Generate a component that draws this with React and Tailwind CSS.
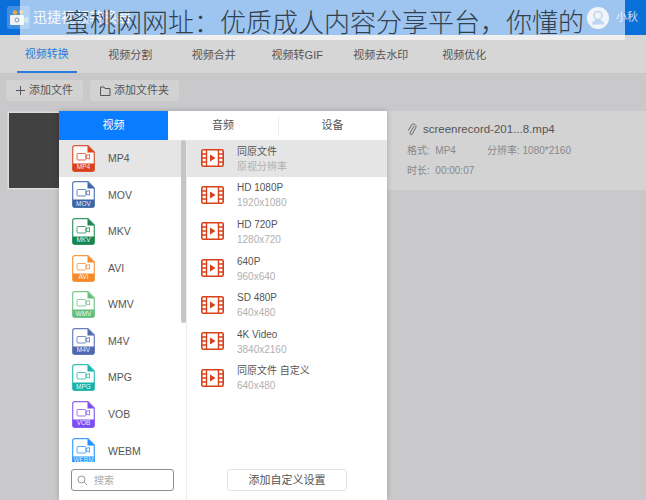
const FAM = { fontFamily: '"Liberation Sans","Noto Sans CJK SC",sans-serif' };

const formats = [
  ["MP4", "#d9401c", true],
  ["MOV", "#3d64a8"],
  ["MKV", "#17854e"],
  ["AVI", "#f58a2c"],
  ["WMV", "#63bf7c"],
  ["M4V", "#5068b0"],
  ["MPG", "#17b3a8"],
  ["VOB", "#7b4df0"],
  ["WEBM", "#1e8fff"],
];

const presets = [
  ["同原文件", "原视分辨率", true],
  ["HD 1080P", "1920x1080"],
  ["HD 720P", "1280x720"],
  ["640P", "960x640"],
  ["SD 480P", "640x480"],
  ["4K Video", "3840x2160"],
  ["同原文件 自定义", "640x480"],
];

const tabs = ["视频转换", "视频分割", "视频合并", "视频转GIF", "视频去水印", "视频优化"];

function FileIcon({ label, color }) {
  return (
    <div className="relative w-[23px] h-[27px] shrink-0">
      <svg width="23" height="27" viewBox="0 0 23 27" className="block">
        <path d="M2.500 .7H16L22.300 7V24.500a1.800 1.800 0 0 1-1.800 1.800H2.500a1.800 1.800 0 0 1-1.800-1.800V2.500a1.800 1.800 0 0 1 1.800-1.800z" fill="#fff" stroke={color} strokeWidth="1.200" opacity=".85" />
        <path d="M15.500 .7L22.300 7.500H15.500z" fill={color} />
        <path d="M.7 18.500H22.300V24.500a1.800 1.800 0 0 1-1.800 1.800H2.500a1.800 1.800 0 0 1-1.800-1.800z" fill={color} />
        <rect x="5" y="8.500" width="9" height="6.500" rx="1" fill="none" stroke={color} strokeWidth="1" opacity=".75" />
        <path d="M14 10.500l3.500-1v4.500L14 13z" fill="none" stroke={color} strokeWidth="1" opacity=".75" />
      </svg>
      <span className="absolute left-0 right-0 top-[18.500px] text-center text-[6.500px] leading-[8px] text-white opacity-90">{label}</span>
    </div>
  );
}

function FilmIcon() {
  return (
    <svg width="23" height="18" viewBox="0 0 23 18" className="block shrink-0">
      <rect x=".8" y=".8" width="21.400" height="16.400" rx="1.500" fill="#fff" stroke="#d9401c" strokeWidth="1.600" />
      <path d="M5.500 1V17M17.500 1V17" stroke="#d9401c" strokeWidth="1.400" />
      <path d="M1 5H5.500M1 9H5.500M1 13H5.500M17.500 5H22M17.500 9H22M17.500 13H22" stroke="#d9401c" strokeWidth="1.600" />
      <path d="M9 5.500l5.500 3.500L9 12.500z" fill="#d9401c" />
    </svg>
  );
}

export default function App() {
  return (
    <div style={FAM} className="relative w-[646px] h-[500px] overflow-hidden bg-[#c9c9cb]">
      {/* title bar */}
      <header className="h-[35px] bg-[#0a6fd8] flex items-center pl-[7px] pr-[8px]">
        <div className="w-[23px] h-[23px] rounded-[3px] bg-[rgba(255,255,255,0.22)] flex items-center justify-center shrink-0">
          <svg width="20" height="17" viewBox="0 0 20 17">
            <rect x="1" y="6" width="14" height="10" rx="1" fill="#eef2f6" />
            <path d="M15 9.500l4-2v7l-4-2z" fill="#8fc7a8" />
            <circle cx="6" cy="3.500" r="2.300" fill="#e8a93c" />
            <circle cx="12" cy="3" r="2" fill="#e8a93c" />
            <circle cx="8" cy="11" r="2" fill="none" stroke="#7a9ab8" />
          </svg>
        </div>
        <span className="ml-[3px] text-[14px] text-[#eaf2fb]">迅捷视频转换器</span>
        <div className="ml-auto flex items-center gap-[7px]">
          <svg width="22" height="22" viewBox="0 0 22 22">
            <circle cx="11" cy="11" r="11" fill="#dce6f2" />
            <circle cx="11" cy="8.500" r="4" fill="none" stroke="#5d97dc" strokeWidth="1.600" />
            <path d="M4.500 17.500c1-3.500 3.500-5 6.500-5s5.500 1.500 6.500 5z" fill="#5d97dc" />
          </svg>
          <span className="text-[11px] text-[#cfe0f3]">小秋</span>
        </div>
      </header>

      {/* tabs */}
      <nav className="h-[39px] bg-[#d6d6d6] border-b border-[#c6c6c6] flex pl-[5px] text-[11px] text-[#555]">
        {tabs.map((t, i) => (
          <div key={t} className="w-[83.500px] h-full flex justify-center">
            <div className={`w-[60px] h-full pt-[2px] flex items-center justify-center whitespace-nowrap ${i === 0 ? "border-b-2 border-[#2b7bdc] text-[#2b7bdc]" : ""}`}>{t}</div>
          </div>
        ))}
      </nav>

      {/* toolbar */}
      <div className="flex gap-[7px] pl-[6px] pt-[6px] text-[11px] text-[#555]">
        <div className="h-[21px] w-[77px] rounded-[3px] bg-[#d2d2d2] flex items-center justify-center gap-[4px]">
          <svg width="9" height="9" viewBox="0 0 9 9"><path d="M4.500 0V9M0 4.500H9" stroke="#555" /></svg>
          添加文件
        </div>
        <div className="h-[21px] w-[89px] rounded-[3px] bg-[#d2d2d2] flex items-center justify-center gap-[3px]">
          <svg width="11" height="10" viewBox="0 0 11 10"><path d="M.5 1h3.500l1 1.500h5v7H.5z" fill="none" stroke="#555" /></svg>
          添加文件夹
        </div>
      </div>

      {/* file row */}
      <section className="mt-[10px] ml-[7px] h-[79px] w-[639px] bg-[#d3d3d3] flex">
        <div className="w-[60px] h-[77px] ml-[1px] mt-[1px] bg-[#414141] border border-[#dcdcdc]" />
        <div className="ml-[339px] pt-[10px] text-[#888] text-[10px]">
          <div className="flex items-center gap-[6px] text-[11.500px] text-[#555]">
            <svg width="10" height="13" viewBox="0 0 10 13"><path d="M7 2.500L3 9.500a1.300 1.300 0 0 0 2.200 1.300L8.800 4A2.500 2.500 0 0 0 4.500 1.500L1.500 7" transform="translate(0 .5)" fill="none" stroke="#666" /></svg>
            screenrecord-201...8.mp4
          </div>
          <div className="mt-[5px] flex">
            <span className="w-[80px]">格式:&nbsp; MP4</span>
            <span>分辨率: 1080*2160</span>
          </div>
          <div className="mt-[5px]">时长:&nbsp; 00:00:07</div>
        </div>
      </section>

      {/* format dialog */}
      <div className="absolute left-[59px] top-[111px] w-[328px] h-[389px] bg-white shadow-[0_0_6px_rgba(0,0,0,0.2)] flex flex-col">
        <div className="h-[29px] flex text-[11px] text-[#555] shrink-0">
          <div className="w-[109px] bg-[#0a7cff] text-white flex items-center justify-center">视频</div>
          <div className="w-[110px] flex items-center justify-center">音频</div>
          <div className="w-[109px] flex items-center justify-center relative">
            <span className="absolute left-0 top-[5px] h-[19px] w-px bg-[#eee]" />
            设备
          </div>
        </div>

        <div className="flex flex-1 min-h-0">
          {/* format list */}
          <div className="relative w-[128px] border-r border-[#ececec] overflow-hidden">
            {formats.map(([name, color, active]) => (
              <div key={name} className={`h-[36.600px] pl-[13px] flex items-center gap-[13px] ${active ? "bg-[#e5e5e5]" : ""}`}>
                <FileIcon label={name} color={color} />
                <span className="mt-[1px] text-[10.500px] text-[#555]">{name}</span>
              </div>
            ))}
            <div className="absolute right-0 top-0 w-[5px] h-[183px] rounded-full bg-[#c5c5c5]" />
            <div className="absolute left-0 right-0 bottom-0 h-[38px] bg-white pl-[12px]">
              <div className="mt-[7px] w-[103px] h-[22px] rounded-[3px] border border-[#8c8c8c] flex items-center pl-[5px] gap-[6px] text-[10px] text-[#aaa] bg-white">
                <svg width="11" height="11" viewBox="0 0 11 11"><circle cx="4.500" cy="4.500" r="3.500" fill="none" stroke="#999" /><path d="M7.200 7.200l3 3" stroke="#999" /></svg>
                搜索
              </div>
            </div>
          </div>

          {/* presets */}
          <div className="relative flex-1">
            {presets.map(([title, sub, active]) => (
              <div key={title} className={`h-[36.600px] pl-[14px] flex items-center gap-[13px] ${active ? "bg-[#e5e5e5]" : ""}`}>
                <FilmIcon />
                <div className="leading-[15px] pt-[1px]">
                  <div className="text-[10px] text-[#555]">{title}</div>
                  <div className="text-[10px] text-[#b0b0b0]">{sub}</div>
                </div>
              </div>
            ))}
            <div className="absolute bottom-[9px] left-[40px] w-[120px] h-[22px] rounded-[3px] border border-[#e3e3e3] flex items-center justify-center text-[11px] text-[#555]">
              添加自定义设置
            </div>
          </div>
        </div>
      </div>

      {/* watermark banner */}
      <div className="absolute left-[20px] top-0 w-[605px] h-[40px] bg-[rgba(255,255,255,0.6)] pl-[44px] text-[26px] leading-[42px] text-[#33404d] whitespace-nowrap font-light" style={{ fontFamily: '"Noto Sans CJK SC",sans-serif' }}>
        蜜桃网网址：优质成人内容分享平台，你懂的
      </div>
    </div>
  );
}
